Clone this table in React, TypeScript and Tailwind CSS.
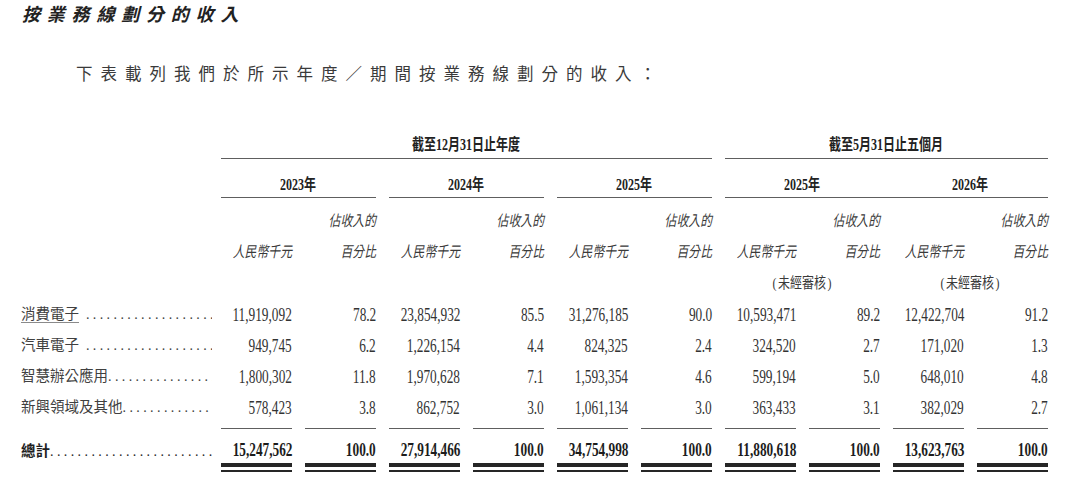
const rows = [
  { label: '消費電子', gap: true, link: true, v: ['11,919,092', '78.2', '23,854,932', '85.5', '31,276,185', '90.0', '10,593,471', '89.2', '12,422,704', '91.2'] },
  { label: '汽車電子', gap: true, v: ['949,745', '6.2', '1,226,154', '4.4', '824,325', '2.4', '324,520', '2.7', '171,020', '1.3'] },
  { label: '智慧辦公應用', v: ['1,800,302', '11.8', '1,970,628', '7.1', '1,593,354', '4.6', '599,194', '5.0', '648,010', '4.8'] },
  { label: '新興領域及其他', v: ['578,423', '3.8', '862,752', '3.0', '1,061,134', '3.0', '363,433', '3.1', '382,029', '2.7'] },
];

const total = ['15,247,562', '100.0', '27,914,466', '100.0', '34,754,998', '100.0', '11,880,618', '100.0', '13,623,763', '100.0'];

const dots = '.'.repeat(60);

function Num({ children, bold }: { children: string; bold?: boolean }) {
  return (
    <div className="flex w-[71px] shrink-0 justify-end">
      <span className={`inline-block shrink-0 origin-right scale-x-[0.7] whitespace-nowrap text-[19px] leading-[26px] ${bold ? 'font-bold text-[#1c1c1c]' : 'text-[#333]'}`}>
        {children}
      </span>
    </div>
  );
}

function HeadCell({ children }: { children?: string }) {
  return (
    <div className="flex w-[71px] shrink-0 justify-end">
      {children && (
        <span className="inline-block shrink-0 origin-right scale-x-[0.79] whitespace-nowrap text-[15px] italic leading-[31px] text-[#3a3a3a]">
          {children}
        </span>
      )}
    </div>
  );
}

function Bold({ children }: { children: string }) {
  return <span className="inline-block shrink-0 scale-x-[0.75] whitespace-nowrap text-[16px] font-bold leading-[24px] text-[#222]">{children}</span>;
}

export default function App() {
  return (
    <div className="h-[490px] w-[1080px] overflow-hidden bg-white font-['Liberation_Serif','Noto_Sans_CJK_TC',serif] text-[#333]">
      <h2 className="h-[30px] pl-[22px] text-[18px] font-bold italic leading-[30px] tracking-[6.8px] text-[#222]">
        按業務線劃分的收入
      </h2>
      <p className="mt-[30px] h-[30px] pl-[76px] text-[16.5px] leading-[30px] tracking-[8px] text-[#3a3a3a]">
        下表載列我們於所示年度／期間按業務線劃分的收入：
      </p>

      <div className="mt-[41px] pl-[21px]">
        {/* period header */}
        <div className="flex h-[28px]">
          <div className="w-[200px] shrink-0" />
          <div className="flex gap-[13px]">
            <div className="flex w-[491px] items-center justify-center border-b-[1.5px] border-[#5e5e5e]">
              <Bold>截至12月31日止年度</Bold>
            </div>
            <div className="flex w-[323px] items-center justify-center border-b-[1.5px] border-[#5e5e5e]">
              <Bold>截至5月31日止五個月</Bold>
            </div>
          </div>
        </div>

        {/* year header */}
        <div className="flex h-[39px]">
          <div className="w-[200px] shrink-0" />
          <div className="flex gap-[13px]">
            {['2023年', '2024年', '2025年'].map((y) => (
              <div key={y} className="flex w-[155px] items-center justify-center border-b-[1.5px] border-[#5e5e5e] pt-[14px]">
                <Bold>{y}</Bold>
              </div>
            ))}
            <div className="flex w-[323px] gap-[13px] border-b-[1.5px] border-[#5e5e5e] pt-[14px]">
              {['2025年', '2026年'].map((y) => (
                <div key={y} className="flex w-[155px] items-center justify-center">
                  <Bold>{y}</Bold>
                </div>
              ))}
            </div>
          </div>
        </div>

        {/* column captions */}
        <div className="mt-[8px] flex h-[31px]">
          <div className="w-[200px] shrink-0" />
          <div className="flex gap-[13px]">
            {[0, 1, 2, 3, 4].map((i) => (
              <div key={i} className="flex gap-[13px]">
                <HeadCell />
                <HeadCell>佔收入的</HeadCell>
              </div>
            ))}
          </div>
        </div>
        <div className="flex h-[31px]">
          <div className="w-[200px] shrink-0" />
          <div className="flex gap-[13px]">
            {[0, 1, 2, 3, 4].map((i) => (
              <div key={i} className="flex gap-[13px]">
                <HeadCell>人民幣千元</HeadCell>
                <HeadCell>百分比</HeadCell>
              </div>
            ))}
          </div>
        </div>
        <div className="flex h-[31px]">
          <div className="w-[200px] shrink-0" />
          <div className="flex gap-[13px]">
            {[0, 1, 2, 3, 4].map((i) => (
              <div key={i} className="flex w-[155px] items-center justify-center">
                {i > 2 && (
                  <span className="inline-block shrink-0 scale-x-[0.8] whitespace-nowrap text-[15px] leading-[31px] text-[#3a3a3a]">
                    <span className="mr-[2px]">(</span>未經審核<span className="ml-[2px]">)</span>
                  </span>
                )}
              </div>
            ))}
          </div>
        </div>

        {/* data rows */}
        {rows.map((r) => (
          <div key={r.label} className="flex h-[31px] items-center">
            <div className="flex w-[200px] shrink-0 items-baseline pr-[9px] text-[14.5px] leading-[26px] text-[#404040]">
              <span className={`shrink-0 ${r.link ? 'underline decoration-[#8a8a8a] decoration-1 underline-offset-[3px]' : ''}`}>{r.label}</span>
              <span className="min-w-0 flex-1 overflow-hidden whitespace-nowrap text-[14px] tracking-[3.4px]">
                {r.gap ? '\u00a0' : ''}
                {dots}
              </span>
            </div>
            <div className="flex gap-[13px]">
              {r.v.map((v, i) => (
                <Num key={i}>{v}</Num>
              ))}
            </div>
          </div>
        ))}

        {/* total */}
        <div className="mt-[5px] flex">
          <div className="mt-[9.5px] flex h-[26px] w-[200px] shrink-0 items-baseline pr-[9px] text-[14.5px] leading-[26px] text-[#1f1f1f]">
            <span className="shrink-0 font-bold">總計</span>
            <span className="min-w-0 flex-1 overflow-hidden whitespace-nowrap text-[14px] tracking-[3.4px]">{dots}</span>
          </div>
          <div className="flex gap-[13px]">
            {total.map((v, i) => (
              <div key={i} className="w-[71px] shrink-0 border-t-[1.5px] border-[#5e5e5e]">
                <div className="mt-[8px] h-[26px]">
                  <Num bold>{v}</Num>
                </div>
                <div className="h-[3.5px] bg-[#262626]" />
                <div className="mt-[3.5px] h-[1.5px] bg-[#262626]" />
              </div>
            ))}
          </div>
        </div>
      </div>
    </div>
  );
}
